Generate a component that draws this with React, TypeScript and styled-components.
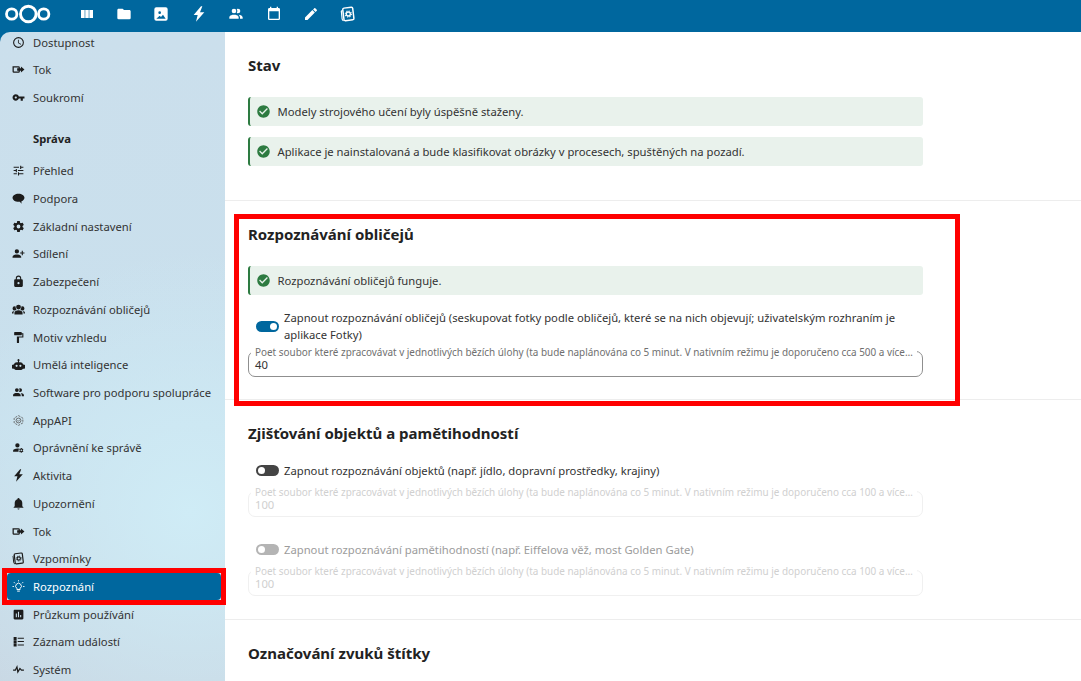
import React from "react";
import styled, { createGlobalStyle } from "styled-components";

const GlobalStyle = createGlobalStyle`
    html, body {
        margin: 0;
        padding: 0;
        background: #ffffff;
        font-family: "Noto Sans", "Liberation Sans", sans-serif;
    }
    * {
        box-sizing: border-box;
    }
`;

const P = {
    clock: "M12,20A8,8 0 0,0 20,12A8,8 0 0,0 12,4A8,8 0 0,0 4,12A8,8 0 0,0 12,20M12,2A10,10 0 0,1 22,12A10,10 0 0,1 12,22C6.47,22 2,17.5 2,12A10,10 0 0,1 12,2M12.5,7V12.25L17,14.92L16.25,16.15L11,13V7H12.5Z",
    flow: "M1 6H12A2.5 2.5 0 0 1 14.5 8.5V9.5H12.2V8.3H3.3V15.7H12.2V14.5H14.5V15.5A2.5 2.5 0 0 1 12 18H3.5A2.5 2.5 0 0 1 1 15.5V6ZM16.5 6.5L23 12L16.5 17.5V14.2H9.5V9.8H16.5V6.5Z",
    key: "M7 14C5.9 14 5 13.1 5 12S5.9 10 7 10 9 10.9 9 12 8.1 14 7 14M12.6 10C11.8 7.7 9.6 6 7 6C3.7 6 1 8.7 1 12S3.7 18 7 18C9.6 18 11.8 16.3 12.6 14H16V18H20V14H23V10H12.6Z",
    tune: "M3,17V19H9V17H3M3,5V7H13V5H3M13,21V19H21V17H13V15H11V21H13M7,9V11H3V13H7V15H9V9H7M21,13V11H11V13H21M15,9H17V7H21V5H17V3H15V9Z",
    comment: "M12 3C5.9 3 1 6.4 1 10.6C1 14.8 5.9 18.2 12 18.2C12.9 18.2 13.7 18.1 14.5 18L17.5 21.5V17.2C20.9 15.9 23 13.4 23 10.6C23 6.4 18.1 3 12 3Z",
    cog: "M12,15.5A3.5,3.5 0 0,1 8.5,12A3.5,3.5 0 0,1 12,8.5A3.5,3.5 0 0,1 15.5,12A3.5,3.5 0 0,1 12,15.5M19.43,12.97C19.47,12.65 19.5,12.33 19.5,12C19.5,11.67 19.47,11.34 19.43,11L21.54,9.37C21.73,9.22 21.78,8.95 21.66,8.73L19.66,5.27C19.54,5.05 19.27,4.96 19.05,5.05L16.56,6.05C16.04,5.66 15.5,5.32 14.87,5.07L14.5,2.42C14.46,2.18 14.25,2 14,2H10C9.75,2 9.54,2.18 9.5,2.42L9.13,5.07C8.5,5.32 7.96,5.66 7.44,6.05L4.95,5.05C4.73,4.96 4.46,5.05 4.34,5.27L2.34,8.73C2.21,8.95 2.27,9.22 2.46,9.37L4.57,11C4.53,11.34 4.5,11.67 4.5,12C4.5,12.33 4.53,12.65 4.57,12.97L2.46,14.63C2.27,14.78 2.21,15.05 2.34,15.27L4.34,18.73C4.46,18.95 4.73,19.03 4.95,18.95L7.44,17.94C7.96,18.34 8.5,18.68 9.13,18.93L9.5,21.58C9.54,21.82 9.75,22 10,22H14C14.25,22 14.46,21.82 14.5,21.58L14.87,18.93C15.5,18.67 16.04,18.34 16.56,17.94L19.05,18.95C19.27,19.03 19.54,18.95 19.66,18.73L21.66,15.27C21.78,15.05 21.73,14.78 21.54,14.63L19.43,12.97Z",
    share: "M9,14C11.67,14 17,15.33 17,18V20H1V18C1,15.33 6.33,14 9,14M18,10V7H20V10H23V12H20V15H18V12H15V10M9,12A4,4 0 0,1 5,8A4,4 0 0,1 9,4A4,4 0 0,1 13,8A4,4 0 0,1 9,12Z",
    lock: "M18,8A2,2 0 0,1 20,10V20A2,2 0 0,1 18,22H6A2,2 0 0,1 4,20V10C4,8.89 4.9,8 6,8H7V6A5,5 0 0,1 12,1A5,5 0 0,1 17,6V8H18M12,3A3,3 0 0,0 9,6V8H15V6A3,3 0 0,0 12,3M12,13A2,2 0 0,0 10,15A2,2 0 0,0 12,17A2,2 0 0,0 14,15C14,13.89 13.1,13 12,13Z",
    group: "M12 3A4.5 4.5 0 0 1 12 12A4.5 4.5 0 0 1 12 3ZM5 6A3.5 3.5 0 0 1 6.8 6.5C6.6 8.5 7 10.6 8.4 12.2C7.7 13.3 6.4 14 5 14A4 4 0 0 1 5 6ZM19 6A4 4 0 0 1 19 14C17.6 14 16.3 13.3 15.6 12.2C17 10.6 17.4 8.5 17.2 6.5A3.5 3.5 0 0 1 19 6ZM12 13.5C16.4 13.5 19.5 15.5 19.5 18V21H4.5V18C4.5 15.5 7.6 13.5 12 13.5ZM0 19.5V18C0 16.4 1.6 15.2 4.2 14.8C3.3 15.8 2.8 16.9 2.8 18V19.5H0ZM24 19.5H21.2V18C21.2 16.9 20.7 15.8 19.8 14.8C22.4 15.2 24 16.4 24 18V19.5Z",
    paint: "M18 4V3C18 2.45 17.55 2 17 2H5C4.45 2 4 2.45 4 3V7C4 7.55 4.45 8 5 8H17C17.55 8 18 7.55 18 7V6H19V10H9V21C9 21.55 9.45 22 10 22H12C12.55 22 13 21.55 13 21V12H21V4H18Z",
    robot: "M12 2A2 2 0 0 1 13 5.7V8H15A6 6 0 0 1 20.7 12H21A3 3 0 0 1 21 20H20.2A4 4 0 0 1 17 22H7A4 4 0 0 1 3.8 20H3A3 3 0 0 1 3 12H3.3A6 6 0 0 1 9 8H11V5.7A2 2 0 0 1 12 2ZM8.5 12.5A2 2 0 1 0 8.5 16.5A2 2 0 1 0 8.5 12.5ZM15.5 12.5A2 2 0 1 0 15.5 16.5A2 2 0 1 0 15.5 12.5Z",
    people: "M16 17V19H2V17S2 13 9 13 16 17 16 17M12.5 7.5A3.5 3.5 0 1 0 9 11A3.5 3.5 0 0 0 12.5 7.5M15.94 13A5.32 5.32 0 0 1 18 17V19H22V17S22 13.37 15.94 13M15 4A3.39 3.39 0 0 0 13.07 4.59A5 5 0 0 1 13.07 10.41A3.39 3.39 0 0 0 15 11A3.5 3.5 0 0 0 15 4Z",
    admin: "M10 4A4 4 0 0 1 10 12A4 4 0 0 1 10 4ZM10 14C11 14 12 14.1 13 14.3C12.4 15.3 12 16.6 12 18C12 18.7 12.1 19.4 12.3 20H2V18C2 15.8 5.6 14 10 14ZM18 13L18.5 14.6L20 14L21 15.5L19.8 16.6C19.9 17 19.9 17.5 19.8 18L21 19.1L20 20.6L18.5 20L18 21.6H16.2L15.7 20L14.2 20.6L13.2 19.1L14.4 18C14.3 17.5 14.3 17 14.4 16.6L13.2 15.5L14.2 14L15.7 14.6L16.2 13H18ZM17.1 15.8A1.5 1.5 0 1 0 17.1 18.8A1.5 1.5 0 1 0 17.1 15.8Z",
    bolt: "M15 0.5L4 13.5H10L7.5 23.5L20 9.5H13.5L17 0.5Z",
    bell: "M21,19V20H3V19L5,17V11C5,7.9 7.03,5.17 10,4.29C10,4.19 10,4.1 10,4A2,2 0 0,1 12,2A2,2 0 0,1 14,4C14,4.1 14,4.19 14,4.29C16.97,5.17 19,7.9 19,11V17L21,19M14,21A2,2 0 0,1 12,23A2,2 0 0,1 10,21",
    chart: "M19 3H5C3.9 3 3 3.9 3 5V19C3 20.1 3.9 21 5 21H19C20.1 21 21 20.1 21 19V5C21 3.9 20.1 3 19 3M9 17H7V10H9V17M13 17H11V7H13V17M17 17H15V13H17V17Z",
    log: "M3 3.5H8.5V9H3V3.5ZM3 9.5H8.5V15H3V9.5ZM3 15.5H8.5V21H3V15.5ZM10.5 5H22V6.8H10.5V5ZM10.5 11.2H22V13H10.5V11.2ZM10.5 17.5H22V19.3H10.5V17.5Z",
    pulse: "M2,12H5.5L9.7,3.5L11.4,13.5L14.5,8.5L17.8,12H22V14.2H17L14.9,12L10.2,20L8.6,10.8L7,14.2H2V12Z",
    check: "M12 2C6.5 2 2 6.5 2 12S6.5 22 12 22 22 17.5 22 12 17.5 2 12 2M10 17L5 12L6.41 10.59L10 14.17L17.59 6.58L19 8L10 17Z",
    dashboard: "M3 6H8.5V18H3V6ZM9.4 6H14.6V18H9.4V6ZM15.5 6H21V18H15.5V6Z",
    folder: "M10,4H4C2.89,4 2,4.89 2,6V18A2,2 0 0,0 4,20H20A2,2 0 0,0 22,18V8C22,6.89 21.1,6 20,6H12L10,4Z",
    image: "M5 2H19A3 3 0 0 1 22 5V19A3 3 0 0 1 19 22H5A3 3 0 0 1 2 19V5A3 3 0 0 1 5 2ZM10 8A2 2 0 1 0 10 12A2 2 0 1 0 10 8ZM5 19H19L15 13L12 16.5L10 14.5Z",
    calendar: "M19 19H5V8H19M16 1V3H8V1H6V3H5C3.89 3 3 3.89 3 5V19A2 2 0 0 0 5 21H19A2 2 0 0 0 21 19V5C21 3.89 20.1 3 19 3H18V1",
    pencil: "M20.71,7.04C21.1,6.65 21.1,6 20.71,5.63L18.37,3.29C18,2.9 17.35,2.9 16.96,3.29L15.12,5.12L18.87,8.87M3,17.25V21H6.75L17.81,9.93L14.06,6.18L3,17.25Z",
};

const Icon: React.FC<{ d: string; size?: number }> = ({ d, size = 13 }) => (
    <svg width={size} height={size} viewBox="0 0 24 24" fill="currentColor" fillRule="evenodd">
        <path d={d} />
    </svg>
);

const MemoriesIcon: React.FC<{ size?: number }> = ({ size = 13 }) => (
    <svg width={size} height={size} viewBox="0 0 24 24" fill="none" stroke="currentColor">
        <rect x="5" y="2.5" width="15" height="19" rx="2" strokeWidth="2.2" transform="rotate(-7 12 12)" />
        <path d="M3.5 6.5L2 8L3.2 19.5C3.4 21 4.4 21.8 5.5 22" strokeWidth="1.8" />
        <circle cx="12.5" cy="12" r="3" strokeWidth="2" />
        <circle cx="12.5" cy="12" r="4.6" strokeWidth="1.6" strokeDasharray="1.8 1.8" />
    </svg>
);

const AppApiIcon = () => (
    <svg width="13" height="13" viewBox="0 0 24 24" fill="none" stroke="#555555" strokeWidth="1.5">
        <path d="M12 3L20 7.5V16.5L12 21L4 16.5V7.5Z" strokeDasharray="4 2" />
        <circle cx="12" cy="12" r="4.5" />
        <path d="M10 12L11.6 13.6L14.4 10.6" />
    </svg>
);

const BulbIcon = () => (
    <svg width="13" height="13" viewBox="0 0 24 24" fill="none" stroke="#ffffff" strokeWidth="1.8">
        <path d="M9 17.5V15.5A5.2 5.2 0 1 1 15 15.5V17.5H9Z" />
        <path d="M9.5 20.5H14.5" />
        <path d="M1 12H3.5M20.5 12H23M3.5 4L5.5 6M20.5 4L18.5 6M12 0.5V2.5" />
    </svg>
);

const Logo = () => (
    <svg width="47" height="24" viewBox="0 0 47 24" fill="none" stroke="#ffffff">
        <circle cx="7.7" cy="12" r="5.2" strokeWidth="2.8" />
        <circle cx="24.3" cy="12" r="7.8" strokeWidth="2.9" />
        <circle cx="39.7" cy="12" r="5.2" strokeWidth="2.8" />
    </svg>
);

type NavEntry = { label: string; icon: React.ReactNode; active?: boolean };

const topEntries: NavEntry[] = [
    { label: "Dostupnost", icon: <Icon d={P.clock} /> },
    { label: "Tok", icon: <Icon d={P.flow} /> },
    { label: "Soukromí", icon: <Icon d={P.key} /> },
];

const adminEntries: NavEntry[] = [
    { label: "Přehled", icon: <Icon d={P.tune} /> },
    { label: "Podpora", icon: <Icon d={P.comment} /> },
    { label: "Základní nastavení", icon: <Icon d={P.cog} /> },
    { label: "Sdílení", icon: <Icon d={P.share} /> },
    { label: "Zabezpečení", icon: <Icon d={P.lock} /> },
    { label: "Rozpoznávání obličejů", icon: <Icon d={P.group} /> },
    { label: "Motiv vzhledu", icon: <Icon d={P.paint} /> },
    { label: "Umělá inteligence", icon: <Icon d={P.robot} /> },
    { label: "Software pro podporu spolupráce", icon: <Icon d={P.people} /> },
    { label: "AppAPI", icon: <AppApiIcon /> },
    { label: "Oprávnění ke správě", icon: <Icon d={P.admin} /> },
    { label: "Aktivita", icon: <Icon d={P.bolt} /> },
    { label: "Upozornění", icon: <Icon d={P.bell} /> },
    { label: "Tok", icon: <Icon d={P.flow} /> },
    { label: "Vzpomínky", icon: <MemoriesIcon /> },
    { label: "Rozpoznání", icon: <BulbIcon />, active: true },
    { label: "Průzkum používání", icon: <Icon d={P.chart} /> },
    { label: "Záznam událostí", icon: <Icon d={P.log} /> },
    { label: "Systém", icon: <Icon d={P.pulse} /> },
];

const headerIcons = [P.dashboard, P.folder, P.image, P.bolt, P.people, P.calendar, P.pencil];

const fieldLabel = (n: number) =>
    `Poet soubor které zpracovávat v jednotlivých bězích úlohy (ta bude naplánována co 5 minut. V nativním režimu je doporučeno cca ${n} a více…`;

const NavList: React.FC<{ entries: NavEntry[] }> = ({ entries }) => (
    <>
        {entries.map((entry) => (
            <NavRow key={entry.label} $active={entry.active}>
                <NavIcon>{entry.icon}</NavIcon>
                {entry.label}
            </NavRow>
        ))}
    </>
);

const Alert: React.FC<{ children: React.ReactNode }> = ({ children }) => (
    <AlertBox>
        <AlertIcon>
            <Icon d={P.check} size={15} />
        </AlertIcon>
        {children}
    </AlertBox>
);

export default function App() {
    return (
        <Page>
            <GlobalStyle />
            <Header>
                <LogoSlot>
                    <Logo />
                </LogoSlot>
                <HeaderIcons>
                    {headerIcons.map((d) => (
                        <HeaderIcon key={d}>
                            <Icon d={d} size={16} />
                        </HeaderIcon>
                    ))}
                    <HeaderIcon>
                        <MemoriesIcon size={16} />
                    </HeaderIcon>
                </HeaderIcons>
            </Header>
            <Body>
                <Sidebar>
                    <SidebarInner>
                        <NavList entries={topEntries} />
                        <NavTitle>Správa</NavTitle>
                        <NavList entries={adminEntries} />
                    </SidebarInner>
                </Sidebar>
                <SidebarMark />
                <Main>
                    <Section $height={169}>
                        <Heading>Stav</Heading>
                        <AlertStack>
                            <Alert>Modely strojového učení byly úspěšně staženy.</Alert>
                            <Alert>Aplikace je nainstalovaná a bude klasifikovat obrázky v procesech, spuštěných na pozadí.</Alert>
                        </AlertStack>
                    </Section>
                    <Section $height={199}>
                        <Heading>Rozpoznávání obličejů</Heading>
                        <AlertStack>
                            <Alert>Rozpoznávání obličejů funguje.</Alert>
                        </AlertStack>
                        <ToggleRow $top={14}>
                            <Toggle $state="on" />
                            <ToggleLabel>
                                Zapnout rozpoznávání obličejů (seskupovat fotky podle obličejů, které se na nich objevují; uživatelským rozhraním je aplikace Fotky)
                            </ToggleLabel>
                        </ToggleRow>
                        <Field $top={8}>
                            <FieldLabel>{fieldLabel(500)}</FieldLabel>
                            <FieldValue>40</FieldValue>
                        </Field>
                        <SectionMark />
                    </Section>
                    <Section $height={220}>
                        <Heading>Zjišťování objektů a pamětihodností</Heading>
                        <ToggleRow $top={17}>
                            <Toggle $state="off" />
                            <ToggleLabel>Zapnout rozpoznávání objektů (např. jídlo, dopravní prostředky, krajiny)</ToggleLabel>
                        </ToggleRow>
                        <Field $top={12} $disabled>
                            <FieldLabel $disabled>{fieldLabel(100)}</FieldLabel>
                            <FieldValue $disabled>100</FieldValue>
                        </Field>
                        <ToggleRow $top={24}>
                            <Toggle $state="disabled" />
                            <ToggleLabel $disabled>Zapnout rozpoznávání pamětihodností (např. Eiffelova věž, most Golden Gate)</ToggleLabel>
                        </ToggleRow>
                        <Field $top={12} $disabled>
                            <FieldLabel $disabled>{fieldLabel(100)}</FieldLabel>
                            <FieldValue $disabled>100</FieldValue>
                        </Field>
                    </Section>
                    <LastSection>
                        <Heading>Označování zvuků štítky</Heading>
                    </LastSection>
                </Main>
            </Body>
        </Page>
    );
}

const Page = styled.div`
    width: 1081px;
    height: 681px;
    overflow: hidden;
    display: flex;
    flex-direction: column;
    background: #00679e;
`;

const Header = styled.header`
    height: 32px;
    flex: none;
    padding-bottom: 5px;
    display: flex;
    align-items: center;
    color: #ffffff;
`;

const LogoSlot = styled.div`
    width: 68px;
    padding-left: 4px;
    display: flex;
    align-items: center;
`;

const HeaderIcons = styled.nav`
    display: flex;
`;

const HeaderIcon = styled.div`
    width: 37.4px;
    display: flex;
    justify-content: center;
`;

const Body = styled.div`
    position: relative;
    flex: 1;
    min-height: 0;
    display: flex;
`;

const Sidebar = styled.aside`
    width: 225px;
    flex: none;
    overflow: hidden;
    border-top-left-radius: 10px;
    background:
        radial-gradient(ellipse 260px 260px at 190px 480px, #cfecf6 0%, rgba(207, 236, 246, 0) 100%),
        linear-gradient(180deg, #cbdfec 0%, #c9e0ed 60%, #c9d8e4 100%);
`;

const SidebarInner = styled.div`
    margin-top: -3.8px;
`;

const NavRow = styled.div<{ $active?: boolean }>`
    height: 27.72px;
    display: flex;
    align-items: center;
    font-size: 11.25px;
    white-space: nowrap;
    color: ${(p) => (p.$active ? "#ffffff" : "#333333")};
    background: ${(p) => (p.$active ? "#00679e" : "transparent")};
    border-radius: ${(p) => (p.$active ? "4px" : "0")};
    margin: ${(p) => (p.$active ? "0 4px 0 7px" : "0")};
    padding-left: ${(p) => (p.$active ? "5px" : "12px")};
`;

const NavIcon = styled.span`
    width: 21px;
    flex: none;
    display: flex;
    color: #1c1c1c;
`;

const NavTitle = styled.div`
    height: 45.5px;
    padding: 20px 0 0 33px;
    font-size: 11.25px;
    line-height: 16px;
    font-weight: 700;
    color: #222222;
`;

const SidebarMark = styled.div`
    position: absolute;
    left: 2px;
    top: 536px;
    width: 224px;
    height: 37px;
    border: 5px solid #ff0000;
`;

const Main = styled.main`
    flex: 1;
    min-width: 0;
    background: #ffffff;
    display: flex;
    flex-direction: column;
`;

const Section = styled.section<{ $height: number }>`
    position: relative;
    height: ${(p) => p.$height}px;
    flex: none;
    padding: 23px 158px 0 23px;
    border-bottom: 1px solid #ededed;
`;

const LastSection = styled.section`
    padding: 23px 158px 0 23px;
`;

const Heading = styled.h2`
    margin: 0;
    height: 22px;
    font-size: 15px;
    line-height: 20px;
    font-weight: 700;
    color: #222222;
`;

const AlertStack = styled.div`
    margin-top: 20px;
    display: flex;
    flex-direction: column;
    gap: 11px;
`;

const AlertBox = styled.div`
    height: 29px;
    display: flex;
    align-items: center;
    padding-left: 6px;
    font-size: 11.25px;
    color: #333333;
    background: #e9f2ec;
    border-left: 2.5px solid #2d7b41;
    border-radius: 3px;
`;

const AlertIcon = styled.span`
    display: flex;
    margin-right: 6.5px;
    color: #2d7b41;
`;

const ToggleRow = styled.div<{ $top: number }>`
    margin-top: ${(p) => p.$top}px;
    padding-left: 8px;
    display: flex;
    align-items: center;
    gap: 5px;
`;

const toggleColor = { on: "#00679e", off: "#444444", disabled: "#b4b4b4" };

const Toggle = styled.span<{ $state: "on" | "off" | "disabled" }>`
    position: relative;
    width: 23px;
    height: 11px;
    flex: none;
    border-radius: 6px;
    background: ${(p) => toggleColor[p.$state]};

    &::after {
        content: "";
        position: absolute;
        top: 2px;
        left: ${(p) => (p.$state === "on" ? "14px" : "2px")};
        width: 7px;
        height: 7px;
        border-radius: 50%;
        background: #ffffff;
    }
`;

const ToggleLabel = styled.span<{ $disabled?: boolean }>`
    font-size: 11.25px;
    line-height: 17px;
    color: ${(p) => (p.$disabled ? "#9c9c9c" : "#333333")};
`;

const Field = styled.div<{ $top: number; $disabled?: boolean }>`
    position: relative;
    margin-top: ${(p) => p.$top}px;
    height: 26px;
    padding: 5px 0 0 6px;
    border: 1px solid ${(p) => (p.$disabled ? "#f0f0f0" : "#8f8f8f")};
    border-radius: 7px;
`;

const FieldLabel = styled.label<{ $disabled?: boolean }>`
    position: absolute;
    left: 2px;
    top: -6px;
    padding: 0 4px;
    height: 12px;
    font-size: 9.94px;
    line-height: 12px;
    background: #ffffff;
    white-space: nowrap;
    color: ${(p) => (p.$disabled ? "#d0d0d0" : "#6f6f6f")};
`;

const FieldValue = styled.div<{ $disabled?: boolean }>`
    font-size: 11.25px;
    line-height: 15px;
    color: ${(p) => (p.$disabled ? "#d0d0d0" : "#333333")};
`;

const SectionMark = styled.div`
    position: absolute;
    left: 9px;
    top: 13px;
    width: 726px;
    height: 192px;
    border: 5px solid #ff0000;
`;
